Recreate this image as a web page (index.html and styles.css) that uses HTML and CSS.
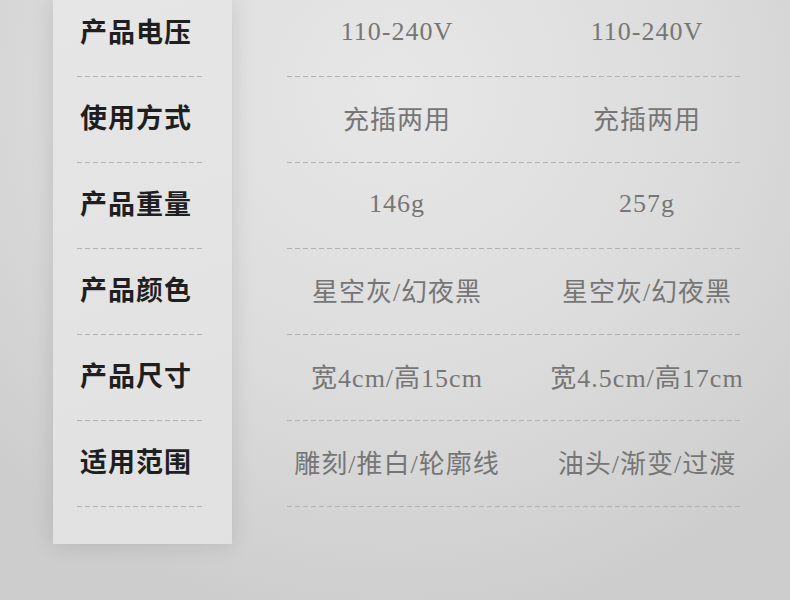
FILE: index.html
```html
<!DOCTYPE html>
<html lang="zh-CN">
<head>
    <meta charset="UTF-8">
    <meta name="viewport" content="width=device-width, initial-scale=1.0">
    <title>产品参数</title>
    <link rel="stylesheet" href="styles.css">
</head>
<body>
    <section class="spec">
        <div class="spec-labels">
            <div class="spec-row"><span class="label">产品电压</span></div>
            <div class="spec-row"><span class="label">使用方式</span></div>
            <div class="spec-row"><span class="label">产品重量</span></div>
            <div class="spec-row"><span class="label">产品颜色</span></div>
            <div class="spec-row"><span class="label">产品尺寸</span></div>
            <div class="spec-row"><span class="label">适用范围</span></div>
        </div>
        <div class="spec-values">
            <div class="spec-row"><span>110-240V</span><span>110-240V</span></div>
            <div class="spec-row"><span>充插两用</span><span>充插两用</span></div>
            <div class="spec-row"><span>146g</span><span>257g</span></div>
            <div class="spec-row"><span>星空灰/幻夜黑</span><span>星空灰/幻夜黑</span></div>
            <div class="spec-row"><span>宽4cm/高15cm</span><span>宽4.5cm/高17cm</span></div>
            <div class="spec-row"><span>雕刻/推白/轮廓线</span><span>油头/渐变/过渡</span></div>
        </div>
    </section>
</body>
</html>
```

FILE: styles.css
```css
* {
    padding: 0;
    margin: 0;
    box-sizing: border-box;
}

html,
body {
    height: 100%;
}

body {
    overflow: hidden;
    font-family: "Liberation Serif", "Noto Sans CJK SC", serif;
    background: radial-gradient(ellipse 70% 90% at 50% 15%, #e7e7e7 0%, #dcdcdc 55%, #cdcdcd 100%);
}

.spec {
    display: flex;
    align-items: flex-start;
}

/* 左侧标签栏 */
.spec-labels {
    margin-left: 53px;
    width: 179px;
    padding: 0 30px 37px 24px;
    background: linear-gradient(160deg, #e6e6e6, #e1e1e1);
    box-shadow: 0 0 22px rgba(0, 0, 0, 0.12);
}

.spec-row {
    height: 86px;
    display: flex;
    align-items: center;
    padding-bottom: 7px;
    background: repeating-linear-gradient(to right, #b2b2b2 0 5px, transparent 5px 8px) left bottom / 100% 1px no-repeat;
}

.spec-row:first-child {
    height: 77px;
    padding-bottom: 16px;
}

.label {
    padding-left: 3px;
    font-family: "Noto Sans CJK SC", sans-serif;
    font-weight: 700;
    font-size: 27px;
    color: #1f1f1f;
    letter-spacing: 1px;
}

/* 右侧参数 */
.spec-values {
    margin-left: 55px;
    width: 453px;
}

.spec-values .spec-row {
    display: grid;
    grid-template-columns: 220px 280px;
    justify-items: center;
    padding-bottom: 5px;
    font-size: 26px;
    letter-spacing: 1px;
    color: #767676;
    white-space: nowrap;
}

.spec-values .spec-row:first-child {
    padding-bottom: 13px;
}
```
